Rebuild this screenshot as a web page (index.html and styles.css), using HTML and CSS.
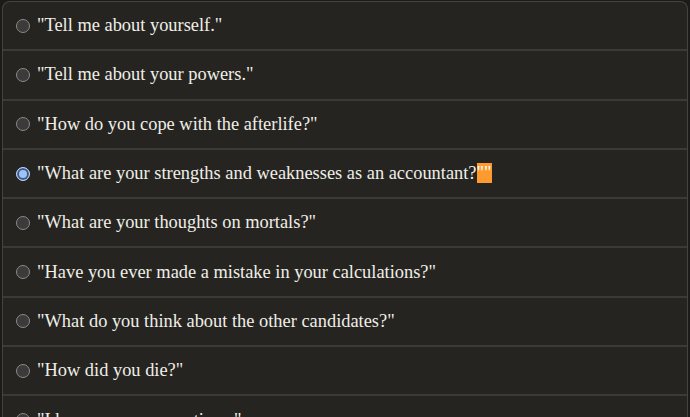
FILE: index.html
```html
<!DOCTYPE html>
<html lang="en">
<head>
    <meta charset="UTF-8">
    <title>Questions</title>
    <link rel="stylesheet" href="styles.css">
</head>
<body>
    <div class="choices">
        <label class="choice"><input type="radio" name="q"> <span>"Tell me about yourself."</span></label>
        <label class="choice"><input type="radio" name="q"> <span>"Tell me about your powers."</span></label>
        <label class="choice"><input type="radio" name="q"> <span>"How do you cope with the afterlife?"</span></label>
        <label class="choice"><input type="radio" name="q" checked> <span>"What are your strengths and weaknesses as an accountant?<mark class="cursor">""</mark></span></label>
        <label class="choice"><input type="radio" name="q"> <span>"What are your thoughts on mortals?"</span></label>
        <label class="choice"><input type="radio" name="q"> <span>"Have you ever made a mistake in your calculations?"</span></label>
        <label class="choice"><input type="radio" name="q"> <span>"What do you think about the other candidates?"</span></label>
        <label class="choice"><input type="radio" name="q"> <span>"How did you die?"</span></label>
        <label class="choice"><input type="radio" name="q"> <span>"I have no more questions."</span></label>
    </div>
</body>
</html>
```
FILE: styles.css
```css
/* Base */
body {
    margin: 0;
    background: #1c1b19;
    font-family: "Liberation Serif", serif;
    color: #f0eee8;
}

/* Choice list */
.choices {
    margin: 1px 2px 0 2px;
    border: 1px solid #45433f;
    border-bottom: none;
    border-radius: 8px 8px 0 0;
    background: #252420;
}

.choice {
    display: flex;
    align-items: center;
    gap: 7px;
    height: 47.3px;
    padding-left: 13px;
    border-bottom: 2px solid #3b3a37;
    font-size: 18.4px;
}

.choice input {
    appearance: none;
    width: 14px;
    height: 14px;
    margin: 0;
    border-radius: 50%;
    border: 1px solid #8a8986;
    background: #3b3b3b;
}

.choice input:checked {
    border-color: #bcd4f5;
    background: #9fc3f7;
    box-shadow: inset 0 0 0 2px #3b5a8a;
}

.cursor {
    background: #ff9a2e;
    color: #fff;
}
```
